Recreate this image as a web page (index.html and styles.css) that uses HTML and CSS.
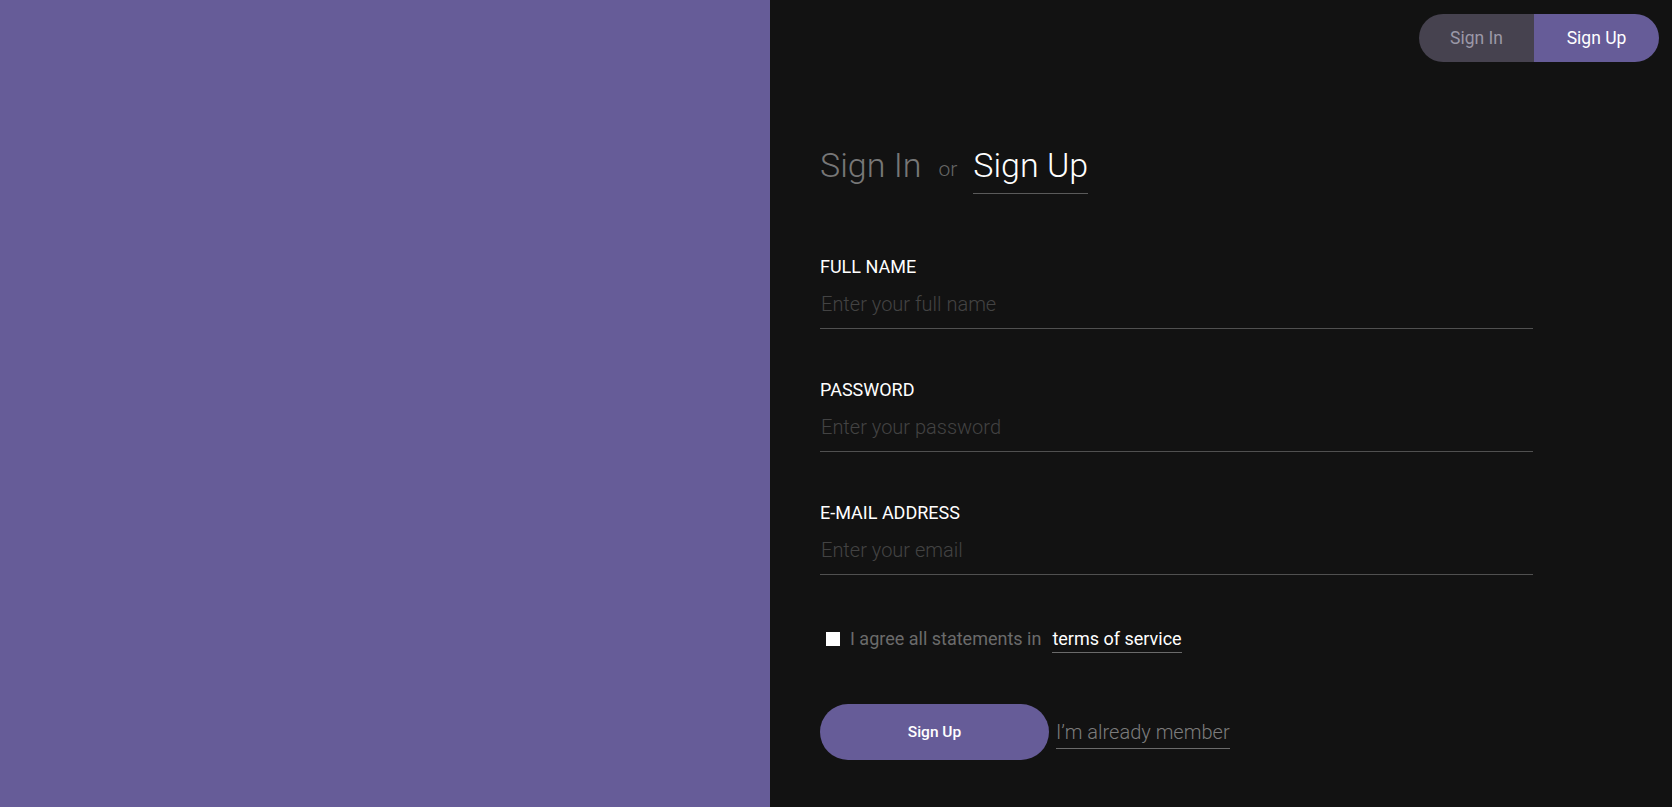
FILE: index.html
```html
<!DOCTYPE html>
<html lang="en">
<head>
<meta charset="utf-8">
<title>Sign Up</title>
<link rel="stylesheet" href="styles.css">
</head>
<body>
<div class="app">
  <aside class="aside"></aside>
  <main class="panel">
    <nav class="switcher">
      <a class="switch-item">Sign In</a>
      <a class="switch-item switch-item--active">Sign Up</a>
    </nav>
    <div class="title">
      <a class="title-link">Sign In</a>
      <span class="title-or">or</span>
      <a class="title-link title-link--active">Sign Up</a>
    </div>
    <form class="form">
      <div class="field">
        <label class="field-label" for="name">Full Name</label>
        <input class="field-input" id="name" type="text" placeholder="Enter your full name">
      </div>
      <div class="field">
        <label class="field-label" for="password">Password</label>
        <input class="field-input" id="password" type="password" placeholder="Enter your password">
      </div>
      <div class="field">
        <label class="field-label" for="email">E-Mail Address</label>
        <input class="field-input" id="email" type="email" placeholder="Enter your email">
      </div>
      <div class="check-row">
        <span class="checkbox"></span>
        <span class="check-text">I agree all statements in</span>
        <a class="terms">terms of service</a>
      </div>
      <div class="actions">
        <button class="btn" type="button">Sign Up</button>
        <a class="member-link">I’m already member</a>
      </div>
    </form>
  </main>
</div>
</body>
</html>
```

FILE: styles.css
```css
* { box-sizing: border-box; }
html, body {
  margin: 0;
  height: 100%;
}
body {
  font-family: Roboto, "Liberation Sans", sans-serif;
  background: #121212;
}
.app {
  display: flex;
  height: 807px;
}
.aside {
  width: 770px;
  flex: none;
  background: #665c98;
}
.panel {
  flex: 1;
  background: #121212;
  padding: 14px 13px 0 50px;
}
.switcher {
  display: flex;
  justify-content: flex-end;
}
.switch-item {
  display: flex;
  align-items: center;
  justify-content: center;
  height: 48px;
  font-size: 17.5px;
  color: #9b98a8;
  background: #46424f;
}
.switch-item:first-child {
  width: 115px;
  border-radius: 24px 0 0 24px;
}
.switch-item:last-child {
  width: 125px;
  border-radius: 0 24px 24px 0;
}
.switch-item--active {
  background: #665c98;
  color: #fff;
}
.title {
  display: flex;
  align-items: flex-start;
  margin-top: 82px;
  font-weight: 300;
}
.title-link {
  display: inline-block;
  font-size: 34px;
  line-height: 42px;
  color: #777;
  padding-bottom: 7px;
}
.title-link--active {
  color: #fff;
  border-bottom: 1px solid #5a5a5a;
}
.title-or {
  font-size: 21px;
  line-height: 42px;
  padding-top: 4px;
  color: #666;
  margin: 0 16px 0 17px;
}
.form {
  margin-top: 62px;
}
.field {
  margin-bottom: 50px;
}
.field-label {
  display: block;
  text-transform: uppercase;
  font-size: 18px;
  line-height: 22px;
  color: #fff;
}
.field-input {
  display: block;
  width: 713px;
  margin-top: 14px;
  padding: 0 0 12px 1px;
  height: 37px;
  font-family: Roboto, "Liberation Sans", sans-serif;
  font-size: 20px;
  line-height: 24px;
  font-weight: 300;
  color: #fff;
  background: transparent;
  border: none;
  border-bottom: 1px solid #505050;
  outline: none;
}
.field-input::placeholder {
  color: #434343;
}
.check-row {
  display: flex;
  align-items: flex-start;
  margin-top: 53px;
  height: 25px;
  font-size: 18px;
  line-height: 22px;
}
.checkbox {
  width: 14px;
  height: 14px;
  background: #fff;
  margin: 4px 10px 0 6px;
}
.check-text {
  color: #6b6b6b;
}
.terms {
  display: inline-block;
  color: #fff;
  margin-left: 11px;
  padding-bottom: 2px;
  border-bottom: 1px solid #6a6a6a;
}
.actions {
  display: flex;
  align-items: flex-start;
  margin-top: 51px;
}
.btn {
  width: 229px;
  height: 56px;
  border: none;
  border-radius: 28px;
  background: #665c98;
  color: #fff;
  font-family: Roboto, "Liberation Sans", sans-serif;
  font-size: 15.5px;
  font-weight: 500;
}
.member-link {
  display: inline-block;
  margin: 16px 0 0 7px;
  font-size: 20px;
  line-height: 24px;
  font-weight: 300;
  color: #7c7c7c;
  padding-bottom: 4px;
  border-bottom: 1.5px solid #6a6a6a;
}
```
